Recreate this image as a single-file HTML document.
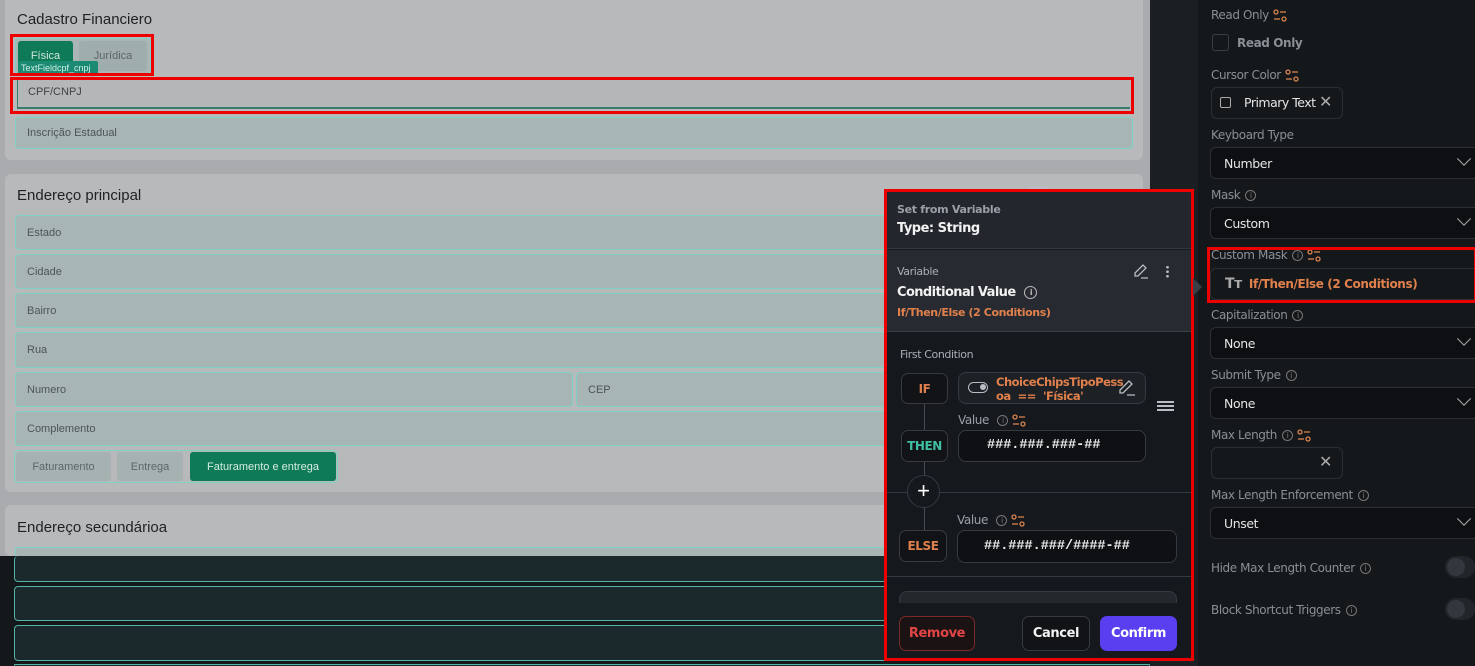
<!DOCTYPE html>
<html><head><meta charset="utf-8"><style>
*{box-sizing:border-box;margin:0;padding:0}
html,body{width:1475px;height:666px;overflow:hidden}
body{background:#15181b;font-family:"Liberation Sans",sans-serif;position:relative}
.a{position:absolute}
.canvas{left:0;top:0;width:1150px;height:556px;background:#a9abae}
.card{background:#b8b9bb;border-radius:6px;left:5px;width:1138px}
.title{font-size:15px;color:#1e2022}
.f{background:#a7b5b4;border:1.5px solid #7fd1c4;border-radius:4px;font-size:11px;color:#4d5556;padding-left:11px;display:flex;align-items:center}
.df{background:#1b292d;border:1.5px solid #52b5a8;border-radius:4px}
.chip{font-size:11px;display:flex;align-items:center;justify-content:center;border-radius:3px}
.red{border:3px solid #e00;}
.pp{font-family:"DejaVu Sans",sans-serif}
.lbl{font-size:12px;color:#8a8f96;font-family:"DejaVu Sans",sans-serif;letter-spacing:-0.4px}
.dd{left:1210px;width:270px;height:32px;background:#0d0f12;border:1px solid #2b2f35;border-radius:6px;color:#e6e6e6;font-size:12.5px;padding-left:13px;display:flex;align-items:center;font-family:"DejaVu Sans",sans-serif;letter-spacing:-0.4px}
.chev{position:absolute;right:4px;top:10px;width:10px;height:10px;border-right:1.5px solid #aaa;border-bottom:1.5px solid #aaa;transform:rotate(45deg) translate(-3px,-3px)}
.tune{display:inline-block;vertical-align:middle;margin-left:4px}
.info{display:inline-block;width:11px;height:11px;border:1px solid #777;border-radius:50%;font-size:8px;line-height:9px;text-align:center;color:#777;vertical-align:middle;margin-left:5px}
.tog{left:1445px;width:30px;height:22px;background:#22262b;border-radius:11px}
.tog:before{content:"";position:absolute;left:2px;top:2px;width:18px;height:18px;border-radius:50%;background:#33373d}
.btn{font-weight:bold;font-size:13px;display:flex;align-items:center;justify-content:center;border-radius:7px;font-family:"DejaVu Sans",sans-serif;letter-spacing:-0.4px}
</style></head><body>
<svg width="0" height="0" style="position:absolute"><defs><g id="t"><circle cx="3" cy="3" r="2" fill="none" stroke="#d9844f" stroke-width="1.3"/><line x1="7" y1="3" x2="13" y2="3" stroke="#d9844f" stroke-width="1.3"/><line x1="1" y1="10" x2="7" y2="10" stroke="#d9844f" stroke-width="1.3"/><circle cx="11" cy="10" r="2" fill="none" stroke="#d9844f" stroke-width="1.3"/></g></defs></svg>

<div class="a canvas"></div>
<div class="a" style="left:1150px;top:0;width:48px;height:666px;background:#1b1e22"></div>
<div class="a" style="left:0;top:556px;width:1150px;height:110px;background:#15181b"></div>

<!-- card 1 -->
<div class="a card" style="top:-6px;height:166px"></div>
<div class="a title" style="left:17px;top:11px">Cadastro Financiero</div>
<div class="a" style="left:15px;top:38px;width:136px;height:36px;border:1.5px solid #7fd1c4;border-radius:4px;background:#a9b6b5"></div>
<div class="a chip" style="left:18px;top:41px;width:55px;height:30px;background:#0e7a58;color:#cfe6dc">Física</div>
<div class="a chip" style="left:79px;top:41px;width:68px;height:30px;background:#a0adad;color:#5c6666">Jurídica</div>
<div class="a" style="left:18px;top:61px;width:80px;height:14px;background:#1b8a72;color:#d0f0e8;font-size:9px;padding-left:3px;line-height:14px;border-radius:2px">TextFieldcpf_cnpj</div>
<div class="a red" style="left:10px;top:34px;width:144px;height:42px"></div>
<div class="a" style="left:17px;top:80px;width:1113px;height:29px;background:#b5b6b7;border-bottom:2px solid #3b7a6c;border-left:1px solid #3b7a6c;font-size:11px;color:#3e4446;padding:5px 10px;line-height:14px">CPF/CNPJ</div>
<div class="a red" style="left:10px;top:77px;width:1124px;height:37px"></div>
<div class="a f" style="left:15px;top:117px;width:1118px;height:32px">Inscrição Estadual</div>

<!-- card 2 -->
<div class="a card" style="top:174px;height:318px"></div>
<div class="a title" style="left:17px;top:187px">Endereço principal</div>
<div class="a f" style="left:15px;top:215px;width:1118px;height:35px">Estado</div>
<div class="a f" style="left:15px;top:254px;width:1118px;height:35px">Cidade</div>
<div class="a f" style="left:15px;top:293px;width:1118px;height:35px">Bairro</div>
<div class="a f" style="left:15px;top:332px;width:1118px;height:36px">Rua</div>
<div class="a f" style="left:15px;top:372px;width:558px;height:35px">Numero</div>
<div class="a f" style="left:576px;top:372px;width:557px;height:35px">CEP</div>
<div class="a f" style="left:15px;top:411px;width:1118px;height:35px">Complemento</div>
<div class="a" style="left:14px;top:450px;width:324px;height:33px;border:1.5px solid #7fd1c4;border-radius:4px"></div>
<div class="a chip" style="left:16px;top:452px;width:95px;height:29px;background:#a6b2b2;color:#5c6666">Faturamento</div>
<div class="a chip" style="left:117px;top:452px;width:66px;height:29px;background:#a6b2b2;color:#5c6666">Entrega</div>
<div class="a chip" style="left:190px;top:452px;width:146px;height:29px;background:#0e7a58;color:#d6ece3">Faturamento e entrega</div>

<!-- card 3 -->
<div class="a card" style="top:505px;height:51px"></div>
<div class="a title" style="left:17px;top:519px">Endereço secundárioa</div>
<div class="a" style="left:15px;top:547px;width:1118px;height:9px;border:1.5px solid #7fd1c4;border-bottom:none;background:#a7b5b4"></div>
<div class="a df" style="left:14px;top:556px;width:1136px;height:26px;border-top:none"></div>
<div class="a df" style="left:14px;top:586px;width:1136px;height:35px"></div>
<div class="a df" style="left:14px;top:625px;width:1136px;height:36px"></div>
<div class="a df" style="left:14px;top:664px;width:1136px;height:2px;border-bottom:none"></div>
<div class="a" style="left:1027px;top:186px;width:20px;height:4px;background:#b9bcc0;border-radius:2px"></div>

<!-- popup -->
<div class="a" style="left:886px;top:191px;width:306px;height:468px;background:#15181c"></div>
<div class="a" style="left:886px;top:191px;width:306px;height:58px;background:#23272d;border-bottom:1px solid #353a41"></div>
<div class="a pp" style="left:897px;top:203px;font-size:11px;font-weight:bold;color:#9aa0a8;letter-spacing:-0.3px">Set from Variable</div>
<div class="a pp" style="left:897px;top:221px;font-size:13px;font-weight:bold;color:#f2f2f2;letter-spacing:-0.5px">Type: String</div>
<div class="a" style="left:886px;top:250px;width:306px;height:82px;background:#272b31;border-bottom:1px solid #3a3f46"></div>
<div class="a pp" style="left:897px;top:265px;font-size:11px;color:#a9aeb5;letter-spacing:-0.4px">Variable</div>
<div class="a pp" style="left:897px;top:285px;font-size:13px;font-weight:bold;color:#f2f2f2;letter-spacing:-0.6px">Conditional Value <span class="info" style="border-color:#bbb;color:#bbb;width:13px;height:13px;line-height:11px">i</span></div>
<div class="a pp" style="left:897px;top:306px;font-size:11px;font-weight:bold;color:#e0804c;letter-spacing:-0.4px">If/Then/Else (2 Conditions)</div>
<svg class="a" style="left:1132px;top:263px" width="18" height="16"><path d="M3 13 L3 10 L11 2 L14 5 L6 13 Z M9 15 L16 15" fill="none" stroke="#b9bec5" stroke-width="1.3"/></svg>
<div class="a" style="left:1166px;top:265px;width:3px;height:13px;background:radial-gradient(circle,#b9bec5 1.2px,transparent 1.5px) 0 0/3px 4.5px"></div>
<div class="a pp" style="left:900px;top:348px;font-size:11px;color:#a9aeb5;letter-spacing:-0.4px">First Condition</div>
<div class="a" style="left:924px;top:402px;width:1px;height:155px;background:#454a52"></div>
<div class="a btn" style="left:901px;top:373px;width:47px;height:31px;background:#111316;border:1px solid #363b42;color:#e0804c;font-size:12px">IF</div>
<div class="a" style="left:958px;top:372px;width:188px;height:32px;background:#1d2024;border:1px solid #363b42;border-radius:8px"></div>
<div class="a" style="left:968px;top:382px;width:20px;height:11px;border:1.5px solid #b9bec5;border-radius:6px"><div style="position:absolute;right:1px;top:1px;width:6px;height:6px;background:#b9bec5;border-radius:50%"></div></div>
<div class="a pp" style="left:996px;top:375px;font-size:11.5px;font-weight:bold;color:#e0804c;line-height:14px;letter-spacing:-0.5px">ChoiceChipsTipoPess<br>oa&nbsp; ==&nbsp; 'Física'</div>
<svg class="a" style="left:1117px;top:379px" width="20" height="18"><path d="M3 14 L3 11 L12 2 L15 5 L6 14 Z M10 16 L18 16" fill="none" stroke="#b9bec5" stroke-width="1.3"/></svg>
<div class="a" style="left:1157px;top:401px;width:17px;height:10px;border-top:2px solid #b9bec5;border-bottom:2px solid #b9bec5"><div style="margin-top:2px;height:2px;background:#b9bec5"></div></div>
<div class="a lbl" style="left:958px;top:413px;color:#9aa0a8">Value <span class="info">i</span><svg class="tune" width="15" height="13"><use href="#t"/></svg></div>
<div class="a btn" style="left:901px;top:430px;width:47px;height:32px;background:#111316;border:1px solid #363b42;color:#3fbfa3;font-size:12px">THEN</div>
<div class="a" style="left:958px;top:430px;width:188px;height:32px;background:#0e1013;border:1px solid #363b42;border-radius:8px;color:#eee;font-family:'Liberation Mono',monospace;font-weight:bold;font-size:13.5px;padding:7px 0 0 28px">###.###.###-##</div>
<div class="a" style="left:886px;top:492px;width:306px;height:1px;background:#353a41"></div>
<div class="a" style="left:907px;top:475px;width:33px;height:33px;border-radius:50%;background:#15181c;border:1px solid #353a41;color:#fff;font-size:22px;text-align:center;line-height:29px">+</div>
<div class="a lbl" style="left:957px;top:513px;color:#9aa0a8">Value <span class="info">i</span><svg class="tune" width="15" height="13"><use href="#t"/></svg></div>
<div class="a btn" style="left:899px;top:530px;width:48px;height:32px;background:#111316;border:1px solid #363b42;color:#e0804c;font-size:12px">ELSE</div>
<div class="a" style="left:957px;top:530px;width:220px;height:33px;background:#0e1013;border:1px solid #363b42;border-radius:8px;color:#eee;font-family:'Liberation Mono',monospace;font-weight:bold;font-size:13.5px;padding:8px 0 0 26px">##.###.###/####-##</div>
<div class="a" style="left:886px;top:576px;width:306px;height:1px;background:#353a41"></div>
<div class="a" style="left:899px;top:591px;width:278px;height:12px;background:#24282d;border:1px solid #363b42;border-bottom:none;border-radius:8px 8px 0 0"></div>
<div class="a btn" style="left:899px;top:616px;width:76px;height:35px;border:1px solid #7a2a2a;background:#1b1214;color:#e24545">Remove</div>
<div class="a btn" style="left:1022px;top:616px;width:68px;height:35px;border:1px solid #363b42;background:#111316;color:#f2f2f2">Cancel</div>
<div class="a btn" style="left:1100px;top:616px;width:77px;height:35px;background:#5a3ff0;color:#fff">Confirm</div>
<div class="a red" style="left:884px;top:189px;width:310px;height:472px"></div>
<div class="a" style="left:1193px;top:278px;width:0;height:0;border-top:9px solid transparent;border-bottom:9px solid transparent;border-left:9px solid #3a3f46"></div>

<!-- right panel -->
<div class="a lbl" style="left:1211px;top:8px">Read Only<svg class="tune" width="15" height="13"><use href="#t"/></svg></div>
<div class="a" style="left:1212px;top:34px;width:17px;height:17px;border:1.5px solid #3a3e44;border-radius:3px"></div>
<div class="a lbl" style="left:1237px;top:36px;font-weight:bold;color:#8a8f96">Read Only</div>
<div class="a lbl" style="left:1211px;top:68px">Cursor Color<svg class="tune" width="15" height="13"><use href="#t"/></svg></div>
<div class="a" style="left:1211px;top:87px;width:132px;height:32px;border:1px solid #2b2f35;border-radius:6px;background:#15181b"></div>
<div class="a" style="left:1220px;top:97px;width:11px;height:11px;border:1px solid #aaa;border-radius:2px"></div>
<div class="a" style="left:1244px;top:95px;font-size:12.5px;color:#e6e6e6;font-family:'DejaVu Sans',sans-serif;letter-spacing:-0.5px">Primary Text</div>
<div class="a" style="left:1319px;top:92px;font-size:16px;color:#aaa">✕</div>
<div class="a lbl" style="left:1211px;top:128px">Keyboard Type</div>
<div class="a dd" style="top:147px">Number<span class="chev" style="right:10px"></span></div>
<div class="a lbl" style="left:1211px;top:188px">Mask<span class="info">i</span></div>
<div class="a dd" style="top:207px">Custom<span class="chev" style="right:10px"></span></div>
<div class="a lbl" style="left:1211px;top:248px">Custom Mask<span class="info">i</span><svg class="tune" width="15" height="13"><use href="#t"/></svg></div>
<div class="a dd" style="top:268px;background:#15181b;font-weight:bold;color:#e0804c;font-size:12px;padding-left:14px"><span style="color:#aaa;font-size:14px;margin-right:7px">Tт</span>If/Then/Else (2 Conditions)</div>
<div class="a red" style="left:1207px;top:247px;width:270px;height:56px"></div>
<div class="a lbl" style="left:1211px;top:308px">Capitalization<span class="info">i</span></div>
<div class="a dd" style="top:327px">None<span class="chev" style="right:10px"></span></div>
<div class="a lbl" style="left:1211px;top:368px">Submit Type<span class="info">i</span></div>
<div class="a dd" style="top:387px">None<span class="chev" style="right:10px"></span></div>
<div class="a lbl" style="left:1211px;top:428px">Max Length<span class="info">i</span><svg class="tune" width="15" height="13"><use href="#t"/></svg></div>
<div class="a" style="left:1211px;top:447px;width:132px;height:32px;border:1px solid #2b2f35;border-radius:6px"></div>
<div class="a" style="left:1319px;top:452px;font-size:16px;color:#aaa">✕</div>
<div class="a lbl" style="left:1211px;top:488px">Max Length Enforcement<span class="info">i</span></div>
<div class="a dd" style="top:507px">Unset<span class="chev" style="right:10px"></span></div>
<div class="a lbl" style="left:1211px;top:561px">Hide Max Length Counter<span class="info">i</span></div>
<div class="a tog" style="top:556px"></div>
<div class="a lbl" style="left:1211px;top:603px">Block Shortcut Triggers<span class="info">i</span></div>
<div class="a tog" style="top:598px"></div>
</body></html>
